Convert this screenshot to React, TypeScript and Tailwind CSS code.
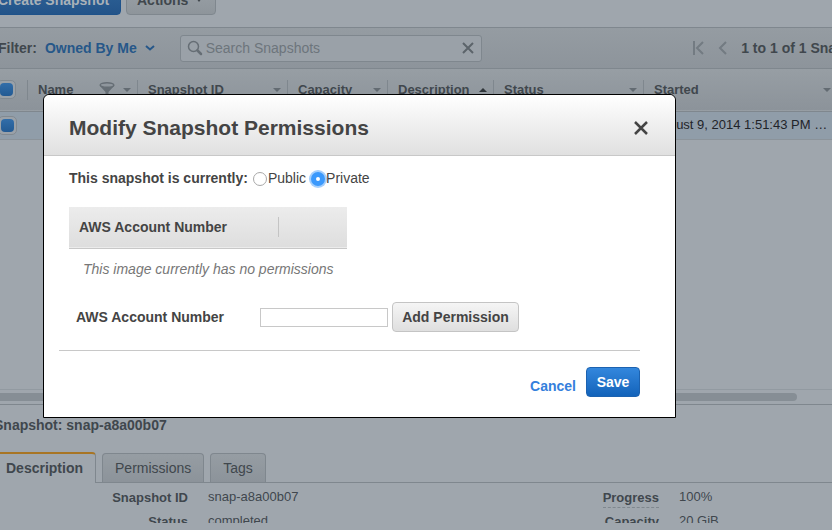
import React, { useState } from "react";

type Sort = "down" | "up" | "none";

interface Column {
  label: string;
  width: string;
  sort: Sort;
  filter?: boolean;
}

const columns: Column[] = [
  { label: "Name", width: "w-[110px]", sort: "down", filter: true },
  { label: "Snapshot ID", width: "w-[150px]", sort: "down" },
  { label: "Capacity", width: "w-[100px]", sort: "down" },
  { label: "Description", width: "w-[106px]", sort: "up" },
  { label: "Status", width: "w-[150px]", sort: "down" },
  { label: "Started", width: "w-[194px]", sort: "down" },
];

const details = [
  [
    { label: "Snapshot ID", value: "snap-a8a00b07", hint: false },
    { label: "Status", value: "completed", hint: false },
  ],
  [
    { label: "Progress", value: "100%", hint: true },
    { label: "Capacity", value: "20 GiB", hint: false },
  ],
];

function SortArrow({ sort }: { sort: Sort }) {
  return sort === "up" ? (
    <svg width="8" height="4" viewBox="0 0 8 4" className="shrink-0 fill-[#30363b]">
      <path d="M0 4 4 0l4 4z" />
    </svg>
  ) : (
    <svg width="8" height="4" viewBox="0 0 8 4" className="shrink-0 fill-[#636b72]">
      <path d="M0 0h8L4 4z" />
    </svg>
  );
}

function FilterIcon() {
  return (
    <svg width="16" height="18" viewBox="0 0 16 18" className="shrink-0">
      <path d="M.5 4.500 6.500 11v6h3v-6l6-6.500z" fill="#666e75" />
      <ellipse cx="8" cy="4" rx="6.800" ry="2.300" fill="#8f969d" stroke="#666e75" strokeWidth="1.500" />
    </svg>
  );
}

function CheckBox({ label }: { label: string }) {
  return (
    <input
      type="checkbox"
      defaultChecked
      aria-label={label}
      className="block size-[19px] appearance-none rounded-[5px] border border-[#828a91] bg-[#9aa1a8] p-[2px] before:block before:size-full before:rounded-[4px] checked:before:bg-linear-to-b checked:before:from-[#326ea9] checked:before:to-[#235a93]"
    />
  );
}

function Toolbar() {
  return (
    <div className="flex h-7 shrink-0 items-end gap-[5px] overflow-hidden border-b border-[#7f878e] pb-3">
      <button className="h-[30px] w-[135px] shrink-0 rounded border border-[#1e528a] bg-linear-to-b from-[#2f6399] to-[#235489] text-[14px] font-bold text-[#a9b1b8]">
        Create Snapshot
      </button>
      <button className="flex h-[30px] w-[90px] shrink-0 items-center justify-between rounded border border-[#7f878e] bg-linear-to-b from-[#9aa1a7] to-[#8e959b] pr-3 pl-2.5 text-[14px] font-bold text-[#40474d]">
        Actions
        <svg width="8" height="6" viewBox="0 0 8 6" className="fill-[#40474d]">
          <path d="M1 1h6L4 5z" />
        </svg>
      </button>
    </div>
  );
}

function FilterBar() {
  return (
    <div className="flex h-[41px] shrink-0 items-center border-b border-[#7f878e] bg-linear-to-b from-[#959ca2] to-[#8d949b] pl-3 text-[14px] font-bold text-[#40474d]">
      <span>Filter:</span>
      <button className="ml-2 flex items-center gap-2 text-[#265789]">
        Owned By Me
        <svg width="10" height="6" viewBox="0 0 10 6" fill="none" stroke="currentColor" strokeWidth="2">
          <path d="m1 1 4 3.500L9 1" />
        </svg>
      </button>
      <div className="ml-[25px] flex h-[27px] w-[302px] shrink-0 items-center rounded-[3px] border border-[#7f878e] bg-[#9aa1a8] px-1.5">
        <svg width="16" height="16" viewBox="0 0 16 16" fill="none" stroke="#666e75" className="shrink-0">
          <circle cx="6.500" cy="6.500" r="5" strokeWidth="1.500" />
          <path d="m10.500 10.500 3.500 3.500" strokeWidth="2.500" strokeLinecap="round" />
        </svg>
        <input
          type="text"
          aria-label="Search Snapshots"
          placeholder="Search Snapshots"
          className="min-w-0 flex-1 bg-transparent pl-[3px] text-[14px] font-normal outline-none placeholder:text-[#6d757c]"
        />
        <button aria-label="Clear search">
          <svg width="14" height="14" viewBox="0 0 14 14" stroke="#5c646b" strokeWidth="2">
            <path d="m2 2 10 10M12 2 2 12" />
          </svg>
        </button>
      </div>
      <div className="flex-1" />
      <div className="-mr-[50px] flex shrink-0 items-center whitespace-nowrap">
        <button aria-label="First page">
          <svg width="12" height="14" viewBox="0 0 12 14" fill="none" stroke="#737b82" strokeWidth="2">
            <path d="M2 0v14M11 1 5 7l6 6" />
          </svg>
        </button>
        <button aria-label="Previous page" className="ml-3.5">
          <svg width="9" height="14" viewBox="0 0 9 14" fill="none" stroke="#737b82" strokeWidth="2">
            <path d="M8 1 2 7l6 6" />
          </svg>
        </button>
        <span className="ml-3.5">1 to 1 of 1 Snapshots</span>
      </div>
    </div>
  );
}

function SnapshotTable() {
  return (
    <div className="min-h-0 flex-1 overflow-hidden">
      <table className="w-[851px] table-fixed border-collapse text-left">
        <thead>
          <tr className="h-[42px] border-b border-[#7f878e] bg-linear-to-b from-[#979ea4] to-[#8c939a] text-[13px] text-[#40474d]">
            <th className="w-[41px] p-0 pl-[11px]">
              <CheckBox label="Select all snapshots" />
            </th>
            {columns.map((c) => (
              <th key={c.label} className={`${c.width} p-0`}>
                <div className="flex h-5 items-center gap-2 border-l border-[#7f878e] pr-1.5 pl-2.5">
                  <span className="flex-1">{c.label}</span>
                  {c.filter && <FilterIcon />}
                  <SortArrow sort={c.sort} />
                </div>
              </th>
            ))}
          </tr>
        </thead>
        <tbody>
          <tr className="h-7 border-b border-[#8b939a] bg-[#909da9] text-[13px] text-[#1f2429]">
            <td className="p-0 pl-3">
              <CheckBox label="Select snapshot" />
            </td>
            <td />
            <td />
            <td />
            <td />
            <td />
            <td className="p-0 pl-2.5 whitespace-nowrap">August 9, 2014 1:51:43 PM …</td>
          </tr>
        </tbody>
      </table>
    </div>
  );
}

function DetailPane() {
  const [tab, setTab] = useState("Description");
  return (
    <section className="flex h-[126px] shrink-0 flex-col border-t border-[#7f878e] pb-[7px]">
      <h2 className="pt-3 pl-2 text-[14px] leading-4 font-bold text-[#40474d]">Snapshot: snap-a8a00b07</h2>
      <div
        role="tablist"
        className="mt-[19px] flex h-[31px] shrink-0 items-end gap-1.5 border-b border-[#7f878e] pl-2 text-[14px] text-[#40474d]"
      >
        {["Description", "Permissions", "Tags"].map((t) => (
          <button
            key={t}
            role="tab"
            aria-selected={t === tab}
            onClick={() => setTab(t)}
            className={
              t === tab
                ? "-mb-px h-[31px] rounded-tr border-t-2 border-r border-t-[#a87524] border-r-[#7f878e] bg-[#9fa6ad] px-3 font-bold"
                : "h-[29px] rounded-t border border-b-0 border-[#7f878e] bg-linear-to-b from-[#969da3] to-[#8c939a] px-3"
            }
          >
            {t}
          </button>
        ))}
      </div>
      <div className="flex min-h-0 overflow-hidden pt-[5px] text-[13px] text-[#40474d]">
        {details.map((group, i) => (
          <dl key={i} className="w-[471px] shrink-0">
            {group.map((d) => (
              <div key={d.label} className="flex h-6 items-start gap-5 whitespace-nowrap">
                <dt className="w-[202px] shrink-0 pt-0.5 text-right leading-4 font-bold">
                  <span className={d.hint ? "inline-block border-b border-dashed border-[#7f878e] pb-px" : ""}>
                    {d.label}
                  </span>
                </dt>
                <dd className="pt-px leading-4">{d.value}</dd>
              </div>
            ))}
          </dl>
        ))}
      </div>
    </section>
  );
}

function PermissionsDialog() {
  const [visibility, setVisibility] = useState("Private");
  return (
    <div
      role="dialog"
      aria-labelledby="dialog-title"
      className="absolute top-[94px] left-[43px] w-[633px] rounded-t-md border border-black bg-white text-[14px] text-[#444]"
    >
      <header className="flex h-[61px] items-center justify-between rounded-t-md border-b border-[#c8c8c8] bg-linear-to-b from-white to-[#e0e0e0] pr-[27px] pl-[25px]">
        <h1 id="dialog-title" className="pt-1.5 text-[21px] leading-7 font-bold">
          Modify Snapshot Permissions
        </h1>
        <button aria-label="Close" className="pt-1.5">
          <svg width="14" height="14" viewBox="0 0 14 14" stroke="#444" strokeWidth="2.500">
            <path d="m1 1 12 12M13 1 1 13" />
          </svg>
        </button>
      </header>

      <div
        role="radiogroup"
        aria-labelledby="visibility-label"
        className="flex items-center gap-[5px] pt-3 pl-[25px] leading-5"
      >
        <span id="visibility-label" className="font-bold">
          This snapshot is currently:
        </span>
        {["Public", "Private"].map((v) => (
          <label key={v} className="flex items-center">
            <input
              type="radio"
              name="visibility"
              checked={visibility === v}
              onChange={() => setVisibility(v)}
              className="mt-0.5 mr-px size-3.5 appearance-none rounded-full border border-[#a8a8a8] bg-white checked:border-[5px] checked:border-[#3b99fc] checked:ring-2 checked:ring-[#a5cffd]"
            />
            {v}
          </label>
        ))}
      </div>

      <table className="mt-[19px] ml-[25px] w-[278px] table-fixed border-collapse">
        <thead>
          <tr className="h-[41px] border-b border-[#c8c8c8] bg-linear-to-b from-[#ececec] to-[#dedede]">
            <th className="w-[209px] p-0 pl-2.5 text-left">AWS Account Number</th>
            <th className="p-0" aria-label="Actions">
              <div className="h-5 border-l border-[#c4c4c4]" />
            </th>
          </tr>
        </thead>
        <tbody>
          <tr className="h-[43px] text-[#777] italic">
            <td colSpan={2} className="p-0 pl-3.5">
              This image currently has no permissions
            </td>
          </tr>
        </tbody>
      </table>

      <div className="mt-[11px] flex items-center pl-8">
        <label htmlFor="account" className="w-[184px] font-bold">
          AWS Account Number
        </label>
        <input id="account" type="text" className="h-[19px] w-32 border border-[#c8c8c8] bg-white px-1 outline-none" />
        <button className="ml-1 h-[30px] w-[127px] rounded border border-[#c4c4c4] bg-linear-to-b from-[#f5f5f5] to-[#dfdfdf] font-bold">
          Add Permission
        </button>
      </div>

      <footer className="mt-[18px] mr-[35px] mb-5 ml-[15px] flex items-center justify-end gap-2.5 border-t border-[#c8c8c8] pt-4 font-bold">
        <a href="#" className="pt-2 text-[#3480dc]">
          Cancel
        </a>
        <button className="h-[30px] w-[54px] rounded border border-[#1c62b0] bg-linear-to-b from-[#3387dd] to-[#1263ba] text-white">
          Save
        </button>
      </footer>
    </div>
  );
}

export default function App() {
  return (
    <div className="relative h-screen overflow-hidden bg-[#9fa6ad] font-['Liberation_Sans',Arial,sans-serif]">
      <main className="-ml-3.5 flex h-full flex-col">
        <Toolbar />
        <FilterBar />
        <SnapshotTable />
        <div className="h-[15px] shrink-0 border-t border-[#929aa1] pt-[3px]">
          <div className="mr-[35px] h-2 rounded-full bg-[#868e95]" />
        </div>
        <DetailPane />
      </main>
      <PermissionsDialog />
    </div>
  );
}
